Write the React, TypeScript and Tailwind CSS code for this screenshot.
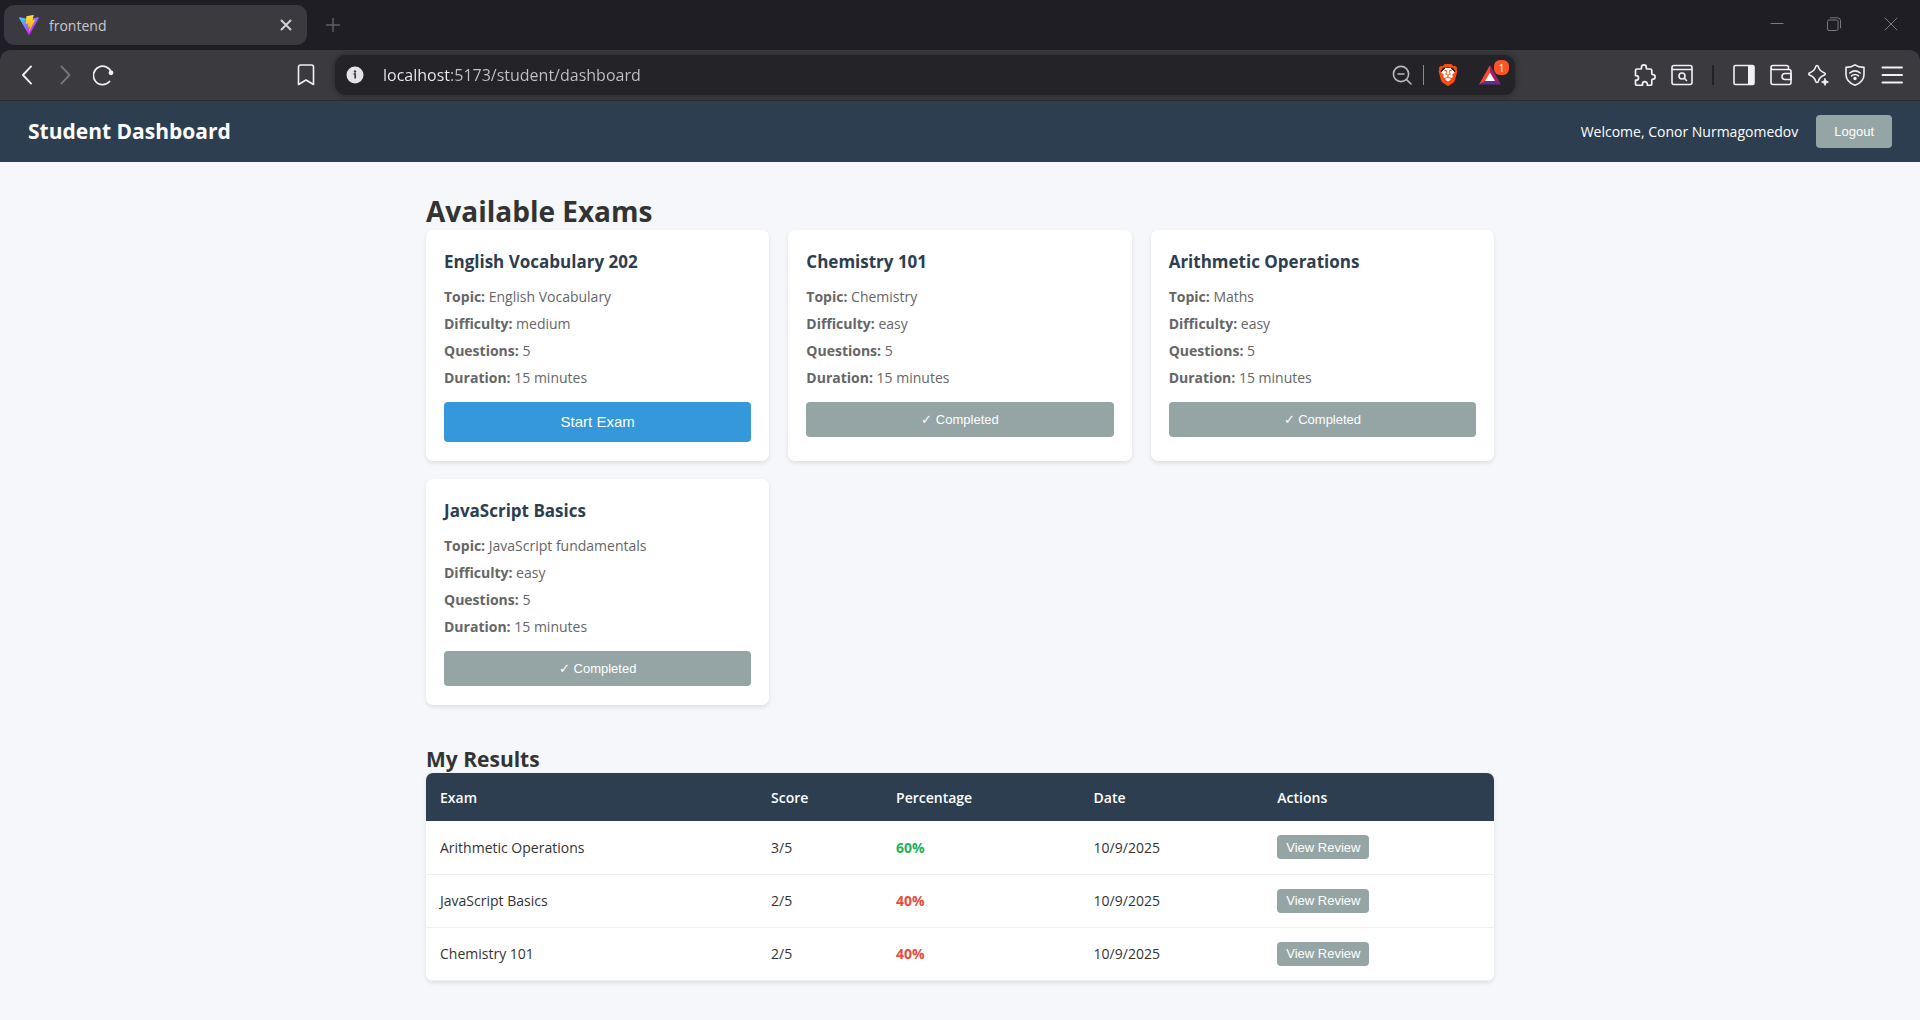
import type { ReactNode } from "react";
import { SiBrave } from "react-icons/si";

type Exam = {
  title: string;
  topic: string;
  difficulty: string;
  questions: number;
  minutes: number;
  completed: boolean;
};

const exams: Exam[] = [
  { title: "English Vocabulary 202", topic: "English Vocabulary", difficulty: "medium", questions: 5, minutes: 15, completed: false },
  { title: "Chemistry 101", topic: "Chemistry", difficulty: "easy", questions: 5, minutes: 15, completed: true },
  { title: "Arithmetic Operations", topic: "Maths", difficulty: "easy", questions: 5, minutes: 15, completed: true },
  { title: "JavaScript Basics", topic: "JavaScript fundamentals", difficulty: "easy", questions: 5, minutes: 15, completed: true },
];

const results = [
  { exam: "Arithmetic Operations", score: "3/5", percentage: 60, date: "10/9/2025" },
  { exam: "JavaScript Basics", score: "2/5", percentage: 40, date: "10/9/2025" },
  { exam: "Chemistry 101", score: "2/5", percentage: 40, date: "10/9/2025" },
];

function ViteLogo() {
  return (
    <svg viewBox="0 0 256 257" className="size-5 shrink-0" aria-hidden="true">
      <defs>
        <linearGradient id="vite-a" x1="-.828%" x2="57.636%" y1="7.652%" y2="78.411%">
          <stop offset="0%" stopColor="#41D1FF" />
          <stop offset="100%" stopColor="#BD34FE" />
        </linearGradient>
        <linearGradient id="vite-b" x1="43.376%" x2="50.316%" y1="2.242%" y2="89.03%">
          <stop offset="0%" stopColor="#FFEA83" />
          <stop offset="8.333%" stopColor="#FFDD35" />
          <stop offset="100%" stopColor="#FFA800" />
        </linearGradient>
      </defs>
      <path
        fill="url(#vite-a)"
        d="M255.153 37.938L134.897 252.976c-2.483 4.44-8.862 4.466-11.382.048L.875 37.958c-2.746-4.814 1.371-10.646 6.827-9.67l120.385 21.517a6.537 6.537 0 0 0 2.322-.004l117.867-21.483c5.438-.991 9.574 4.796 6.877 9.62Z"
      />
      <path
        fill="url(#vite-b)"
        d="M185.432.063L96.44 17.501a3.268 3.268 0 0 0-2.634 3.014l-5.474 92.456a3.268 3.268 0 0 0 3.997 3.378l24.777-5.718c2.318-.535 4.413 1.507 3.936 3.838l-7.361 36.047c-.495 2.426 1.782 4.5 4.151 3.78l15.304-4.649c2.372-.72 4.652 1.36 4.15 3.788l-11.698 56.621c-.732 3.542 3.979 5.473 5.943 2.437l1.313-2.028l72.516-144.72c1.215-2.423-.88-5.186-3.54-4.672l-25.505 4.922c-2.396.462-4.435-1.77-3.759-4.114l16.646-57.705c.677-2.35-1.37-4.583-3.769-4.113Z"
      />
    </svg>
  );
}

function LineIcon({ children, className = "size-[22px]" }: { children: ReactNode; className?: string }) {
  return (
    <svg
      viewBox="0 0 22 22"
      className={`${className} shrink-0`}
      fill="none"
      stroke="currentColor"
      strokeWidth="1.6"
      strokeLinecap="round"
      strokeLinejoin="round"
      aria-hidden="true"
    >
      {children}
    </svg>
  );
}

function IconButton({ label, className = "", children }: { label: string; className?: string; children: ReactNode }) {
  return (
    <button type="button" aria-label={label} className={`flex shrink-0 items-center justify-center ${className}`}>
      {children}
    </button>
  );
}

function TabBar() {
  return (
    <div className="flex h-[50px] items-center bg-[#1f1e24] pl-1">
      <div className="flex h-10 w-[303px] items-center rounded-[10px] bg-[#3b3a3f] pr-[14px] pl-[15px]">
        <ViteLogo />
        <span className="ml-[10px] flex-1 text-[14px] text-[#c9c8cd]">frontend</span>
        <IconButton label="Close tab" className="text-[#d2d1d6]">
          <svg viewBox="0 0 14 14" className="size-[14px]" stroke="currentColor" strokeWidth="2" strokeLinecap="round" aria-hidden="true">
            <path d="M2.500 2.500l9 9M11.500 2.500l-9 9" />
          </svg>
        </IconButton>
      </div>
      <IconButton label="New tab" className="ml-[19px] text-[#5f5e64]">
        <svg viewBox="0 0 14 14" className="size-[14px]" stroke="currentColor" strokeWidth="1.500" aria-hidden="true">
          <path d="M7 0v14M0 7h14" />
        </svg>
      </IconButton>
      <div className="ml-auto flex items-center gap-[43px] pr-[22px] pb-[2px] text-[#7a797e]">
        <IconButton label="Minimize">
          <svg viewBox="0 0 14 14" className="size-[14px]" stroke="currentColor" aria-hidden="true">
            <path d="M.5 6.500h13" />
          </svg>
        </IconButton>
        <IconButton label="Restore">
          <svg viewBox="0 0 14 14" className="size-[14px]" fill="none" stroke="currentColor" aria-hidden="true">
            <rect x=".5" y="3" width="10.500" height="10.500" rx="1.500" />
            <path d="M3 .8h7.500a3 3 0 0 1 3 3v7.500" />
          </svg>
        </IconButton>
        <IconButton label="Close window">
          <svg viewBox="0 0 14 14" className="size-[14px]" stroke="currentColor" aria-hidden="true">
            <path d="M.7.7l12.600 12.600M13.300.7L.7 13.300" />
          </svg>
        </IconButton>
      </div>
    </div>
  );
}

function AddressBar() {
  return (
    <div className="flex h-10 min-w-0 flex-1 items-center rounded-[11px] bg-[#242328] pr-[13px] pl-[11px] shadow-[0_0_6px_rgba(0,0,0,0.35)]">
      <IconButton label="Site information">
        <svg viewBox="0 0 18 18" className="size-[18px]" aria-hidden="true">
          <circle cx="9" cy="9" r="8.500" fill="#e4e3e8" />
          <circle cx="9" cy="5.500" r="1.200" fill="#3b3a3f" />
          <path d="M7.500 8h1.700v4.600" fill="none" stroke="#3b3a3f" strokeWidth="1.700" />
        </svg>
      </IconButton>
      <input
        type="text"
        aria-label="Address"
        defaultValue="localhost:5173/student/dashboard"
        className="ml-[19px] min-w-0 flex-1 bg-[linear-gradient(90deg,#f0eff4_67px,#c3c2c7_67px)] bg-clip-text text-[16px] text-transparent outline-none"
      />
      <IconButton label="Zoom" className="text-[#b9b8bd]">
        <svg viewBox="0 0 20 20" className="size-5" fill="none" stroke="currentColor" strokeWidth="1.600" strokeLinecap="round" aria-hidden="true">
          <circle cx="9" cy="9" r="7.600" />
          <path d="M6 9h6M14.600 14.600l4.400 4.400" />
        </svg>
      </IconButton>
      <div className="mr-[13px] ml-[11px] h-5 w-px bg-[#8b8a90]" />
      <IconButton label="Brave Shields">
        <span className="flex size-[22px] items-center justify-center bg-[radial-gradient(circle,#ffffff_0_7px,transparent_7px)] text-[#fb4c12]">
          <SiBrave className="size-[22px]" />
        </span>
      </IconButton>
      <IconButton label="Brave Rewards" className="relative ml-[19px]">
        <svg viewBox="0 0 24 22" className="h-[22px] w-6" aria-hidden="true">
          <path d="M12 1L1 20.500l6.600-3.700L12 9z" fill="#ff4724" />
          <path d="M12 1l11 19.500-6.600-3.700L12 9z" fill="#9e1f63" />
          <path d="M1 20.500h22l-6.600-4H7.600z" fill="#662d91" />
          <path d="M12 8.600l5 8.400H7z" fill="#fff" />
        </svg>
        <span className="absolute -top-1 -right-[7px] flex size-[15px] items-center justify-center rounded-[6px] bg-[#fb542b] text-[10px] leading-none text-white">
          1
        </span>
      </IconButton>
    </div>
  );
}

function Toolbar() {
  return (
    <div className="bg-[#1f1e24]">
      <div className="flex h-[51px] items-center rounded-t-[10px] border-b border-[#2f2b2e] bg-[#3b3a3f] text-[#f1f0f5]">
        <div className="flex w-[335px] shrink-0 items-center gap-[18px] pr-[18px] pl-[17px]">
          <IconButton label="Back">
            <LineIcon className="size-5">
              <path d="M15.500 1.500L6.500 11l9 9.500" strokeWidth="2" />
            </LineIcon>
          </IconButton>
          <IconButton label="Forward" className="text-[#77767b]">
            <LineIcon className="size-5">
              <path d="M7 1.500L16 11l-9 9.500" strokeWidth="2" />
            </LineIcon>
          </IconButton>
          <IconButton label="Reload">
            <LineIcon>
              <path d="M18.500 9A9.200 9.200 0 1 0 16.500 17.500" strokeWidth="1.700" />
              <circle cx="18" cy="8.800" r="2.400" fill="currentColor" stroke="none" />
            </LineIcon>
          </IconButton>
          <IconButton label="Bookmark" className="ml-auto">
            <LineIcon>
              <path d="M5.500 1h11a2 2 0 0 1 2 2v17.500L11 16l-7.500 4.500V3a2 2 0 0 1 2-2z" />
            </LineIcon>
          </IconButton>
        </div>
        <AddressBar />
        <div className="flex w-[405px] shrink-0 items-center justify-end gap-[15px] pr-[17px]">
          <IconButton label="Extensions">
            <svg viewBox="1 1 22 22" className="size-[22px]" fill="none" stroke="currentColor" strokeWidth="1.700" strokeLinejoin="round" aria-hidden="true">
              <path d="M4 6h3.500a1 1 0 0 0 1-1V4.300a2.400 2.400 0 0 1 4.800 0V5a1 1 0 0 0 1 1h3a1.500 1.500 0 0 1 1.500 1.500v3.100a1 1 0 0 0 1 1 2.300 2.300 0 0 1 0 4.600 1 1 0 0 0-1 1v3.600a1.500 1.500 0 0 1-1.500 1.500h-3v-1.200a2.400 2.400 0 0 0-4.800 0v1.200H4a1.500 1.500 0 0 1-1.500-1.500v-3.600h.7a2.300 2.300 0 0 0 0-4.600h-.7V7.500A1.500 1.500 0 0 1 4 6z" />
            </svg>
          </IconButton>
          <IconButton label="Search tabs">
            <LineIcon>
              <rect x="1" y="1.500" width="20" height="19" rx="2" />
              <path d="M1 5.500h20" strokeWidth="1.300" />
              <circle cx="11" cy="12" r="3" />
              <path d="M13.300 14.300l2.200 2.200" />
            </LineIcon>
          </IconButton>
          <div className="mx-1 h-5 w-[2px] bg-[#222126]" />
          <IconButton label="Sidebar">
            <LineIcon>
              <rect x="1" y="1.500" width="20" height="19" rx="1.500" />
              <rect x="15" y="1.500" width="6" height="19" fill="currentColor" stroke="none" />
            </LineIcon>
          </IconButton>
          <IconButton label="Wallet">
            <LineIcon>
              <path d="M18.500 5V3.500a2 2 0 0 0-2-2H3a2 2 0 0 0 0 4h16a2 2 0 0 1 2 2v11a2 2 0 0 1-2 2H3a2 2 0 0 1-2-2v-15" />
              <path d="M21 9.500h-6a3 3 0 0 0 0 6h6z" />
            </LineIcon>
          </IconButton>
          <IconButton label="Leo AI">
            <LineIcon>
              <path d="M10 1.500c.8 0 1.200.7 1.400 1.400.9 3.200 1.800 4.300 5.200 5.600 2.300.8 2.300 2.200 0 3-3.400 1.300-4.300 2.400-5.200 5.600-.4 1.900-2.400 1.900-2.800 0-.9-3.200-1.800-4.300-5.200-5.600-2.300-.8-2.300-2.200 0-3 3.400-1.300 4.300-2.400 5.200-5.600.2-.7.600-1.400 1.400-1.400z" />
              <path d="M18 14.500l1.100 2.400 2.400 1.100-2.400 1.100L18 21.500l-1.100-2.400-2.400-1.100 2.400-1.100z" fill="currentColor" strokeWidth=".8" />
            </LineIcon>
          </IconButton>
          <IconButton label="VPN">
            <LineIcon>
              <path d="M11 .8c2.500 1.700 5.500 2.400 9 2.600v7c0 5-3.400 8.600-9 10.800-5.600-2.200-9-5.800-9-10.800v-7C5.500 3.200 8.500 2.500 11 .8z" />
              <path d="M5.800 9c3.200-2.600 7.200-2.600 10.400 0M7.500 11.800c2.200-1.700 4.800-1.700 7 0" />
              <circle cx="11" cy="14.500" r="1.700" fill="currentColor" stroke="none" />
            </LineIcon>
          </IconButton>
          <IconButton label="Menu">
            <LineIcon>
              <path d="M1.500 3.500h19.500M1.500 11h19.500M1.500 18.500h19.500" strokeWidth="1.900" />
            </LineIcon>
          </IconButton>
        </div>
      </div>
    </div>
  );
}

function Detail({ label, value }: { label: string; value: ReactNode }) {
  return (
    <p className="text-[14px] leading-[27px] text-[#666666]">
      <strong className="font-bold">{label}:</strong> {value}
    </p>
  );
}

function ExamCard({ exam }: { exam: Exam }) {
  return (
    <article className="rounded-[7px] bg-white px-[18px] pt-[18px] pb-[19px] shadow-[0_2px_4px_rgba(0,0,0,0.1)]">
      <h3 className="mb-[7px] text-[17px] leading-7 font-bold text-[#2c3e50]">{exam.title}</h3>
      <Detail label="Topic" value={exam.topic} />
      <Detail label="Difficulty" value={exam.difficulty} />
      <Detail label="Questions" value={exam.questions} />
      <Detail label="Duration" value={`${exam.minutes} minutes`} />
      {exam.completed ? (
        <button
          type="button"
          disabled
          className="mt-[11px] h-[35px] w-full rounded-[4px] bg-[#95a5a6] font-['Liberation_Sans',sans-serif] text-[13px] text-white"
        >
          ✓ Completed
        </button>
      ) : (
        <button
          type="button"
          className="mt-[11px] h-10 w-full rounded-[4px] bg-[#3498db] font-['Liberation_Sans',sans-serif] text-[15px] text-white"
        >
          Start Exam
        </button>
      )}
    </article>
  );
}

function Results() {
  return (
    <div className="overflow-hidden rounded-[7px] bg-white shadow-[0_2px_4px_rgba(0,0,0,0.1)]">
      <table className="w-full table-fixed text-left text-[14px] text-[#333333]">
        <thead className="bg-[#2c3e50] text-white">
          <tr className="h-12">
            <th scope="col" className="w-[31%] px-[14px] font-semibold">Exam</th>
            <th scope="col" className="w-[11.7%] px-[14px] font-semibold">Score</th>
            <th scope="col" className="w-[18.5%] px-[14px] font-semibold">Percentage</th>
            <th scope="col" className="w-[17.2%] px-[14px] font-semibold">Date</th>
            <th scope="col" className="px-[14px] font-semibold">Actions</th>
          </tr>
        </thead>
        <tbody>
          {results.map((r) => (
            <tr key={r.exam} className="h-[53px] border-b border-[#ecf0f1]">
              <td className="px-[14px]">{r.exam}</td>
              <td className="px-[14px]">{r.score}</td>
              <td className={r.percentage >= 50 ? "px-[14px] font-bold text-[#27ae60]" : "px-[14px] font-bold text-[#e74c3c]"}>
                {r.percentage}%
              </td>
              <td className="px-[14px]">{r.date}</td>
              <td className="px-[14px]">
                <button
                  type="button"
                  className="block h-6 rounded-[4px] bg-[#95a5a6] px-[9px] font-['Liberation_Sans',sans-serif] text-[13px] text-white"
                >
                  View Review
                </button>
              </td>
            </tr>
          ))}
        </tbody>
      </table>
    </div>
  );
}

export default function App() {
  return (
    <div className="min-h-screen bg-[#f5f7fb] font-['Open_Sans',sans-serif]">
      <TabBar />
      <Toolbar />
      <header className="flex h-[61px] items-center justify-between bg-[#2c3e50] px-7 text-white">
        <h1 className="text-[21px] font-bold">Student Dashboard</h1>
        <div className="flex items-center gap-[18px]">
          <span className="text-[14px]">Welcome, Conor Nurmagomedov</span>
          <button
            type="button"
            className="h-[33px] rounded-[4px] bg-[#95a5a6] px-[18px] font-['Liberation_Sans',sans-serif] text-[13px] text-white"
          >
            Logout
          </button>
        </div>
      </header>
      <main className="mx-auto w-full max-w-[1068px] pt-[30px] pb-9">
        <section>
          <h2 className="text-[28px] leading-[38px] font-bold text-[#333333]">Available Exams</h2>
          <div className="grid grid-cols-3 gap-x-[19px] gap-y-[18px]">
            {exams.map((exam) => (
              <ExamCard key={exam.title} exam={exam} />
            ))}
          </div>
        </section>
        <section className="mt-10">
          <h2 className="text-[21px] leading-7 font-bold text-[#333333]">My Results</h2>
          <Results />
        </section>
      </main>
    </div>
  );
}
